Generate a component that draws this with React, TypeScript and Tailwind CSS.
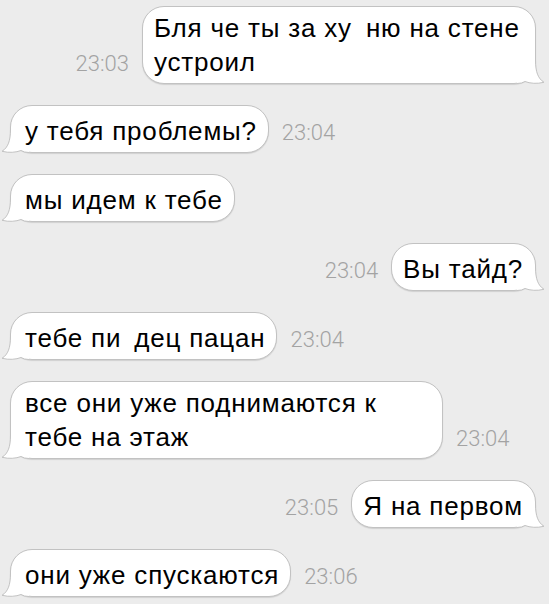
import type { ReactNode } from 'react'

interface Msg {
  side: 'in' | 'out'
  time: string
  body: ReactNode
  lines?: number
  width?: string
}

// blank spot where a letter was painted over in the original
const Gap = ({ w }: { w: string }) => <span className={`inline-block ${w}`} />

const messages: Msg[] = [
  {
    side: 'out',
    time: '23:03',
    lines: 2,
    width: 'w-[394px]',
    body: (
      <>
        Бля че ты за ху<Gap w="w-[14px]" />ню на стене
        <br />
        устроил
      </>
    ),
  },
  { side: 'in', time: '23:04', body: 'у тебя проблемы?' },
  { side: 'in', time: '', body: 'мы идем к тебе' },
  { side: 'out', time: '23:04', body: 'Вы тайд?' },
  {
    side: 'in',
    time: '23:04',
    body: (
      <>
        тебе пи<Gap w="w-[13px]" />дец пацан
      </>
    ),
  },
  {
    side: 'in',
    time: '23:04',
    lines: 2,
    width: 'w-[433px]',
    body: (
      <>
        все они уже поднимаются к
        <br />
        тебе на этаж
      </>
    ),
  },
  { side: 'out', time: '23:05', body: 'Я на первом' },
  { side: 'in', time: '23:06', body: 'они уже спускаются' },
]

function Tail({ side }: { side: 'in' | 'out' }) {
  const pos = side === 'in' ? 'left-[-10px]' : 'right-[-10px] -scale-x-100'
  return (
    <svg
      className={`absolute bottom-[-1px] ${pos}`}
      width="28"
      height="24"
      viewBox="0 0 28 24"
    >
      <path
        d="M9.5 0 C9.5 12 7 18.5 1 22.3 C8 24 15 23.5 20 21.5 Q23 23.5 28 23.5 L28 0 Z"
        fill="#ffffff"
      />
      <path
        d="M9.5 0 C9.5 12 7 18.5 1 22.3 C8 24 15 23.5 20 21.5 Q23 23.5 28 23.5"
        fill="none"
        stroke="#c2c2c2"
        strokeWidth="1"
      />
    </svg>
  )
}

function Bubble({ msg }: { msg: Msg }) {
  const stamp = (
    <span
      className="mb-[8px] text-[22px] leading-[24px] font-light text-[#a3a3a3] shrink-0"
      style={{ fontFamily: 'Roboto, "Liberation Sans", sans-serif' }}
    >
      {msg.time}
    </span>
  )
  const out = msg.side === 'out'
  return (
    <div
      className={`flex items-end gap-[13px] ${
        out ? 'justify-end pr-[13px]' : 'justify-start pl-[10px]'
      }`}
    >
      {out && stamp}
      <div
        className={`relative rounded-[22px] border border-[#c2c2c2] bg-white text-[26px] tracking-[0.8px] text-black shadow-[0_1px_1px_rgba(0,0,0,0.12)] whitespace-nowrap ${
          msg.lines === 2 ? 'pt-[4px] pb-[4px] leading-[34px]' : 'pt-[9px] pb-[5px] leading-[32px]'
        } ${out ? 'pl-[11px] pr-[12px]' : 'pl-[14px] pr-[11px]'} ${msg.width ?? ''}`}
      >
        <Tail side={msg.side} />
        <span className="relative">{msg.body}</span>
      </div>
      {!out && stamp}
    </div>
  )
}

export default function App() {
  return (
    <div
      className="w-[549px] h-[604px] overflow-hidden bg-[#ececec] flex flex-col gap-[21px] pt-[6px]"
      style={{ fontFamily: '"Liberation Sans", Arial, sans-serif' }}
    >
      {messages.map((m, i) => (
        <Bubble key={i} msg={m} />
      ))}
    </div>
  )
}
